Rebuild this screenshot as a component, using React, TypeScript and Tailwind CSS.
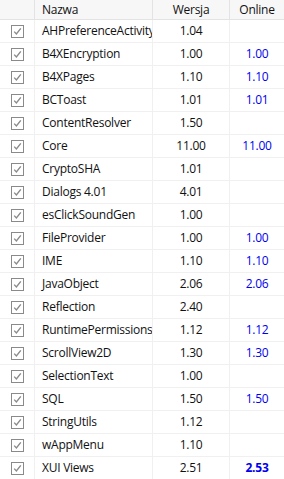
import React from 'react';

type Lib = { name: string; version: string; online?: string; bold?: boolean };

const libs: Lib[] = [
  { name: 'AHPreferenceActivity', version: '1.04' },
  { name: 'B4XEncryption', version: '1.00', online: '1.00' },
  { name: 'B4XPages', version: '1.10', online: '1.10' },
  { name: 'BCToast', version: '1.01', online: '1.01' },
  { name: 'ContentResolver', version: '1.50' },
  { name: 'Core', version: '11.00', online: '11.00' },
  { name: 'CryptoSHA', version: '1.01' },
  { name: 'Dialogs 4.01', version: '4.01' },
  { name: 'esClickSoundGen', version: '1.00' },
  { name: 'FileProvider', version: '1.00', online: '1.00' },
  { name: 'IME', version: '1.10', online: '1.10' },
  { name: 'JavaObject', version: '2.06', online: '2.06' },
  { name: 'Reflection', version: '2.40' },
  { name: 'RuntimePermissions', version: '1.12', online: '1.12' },
  { name: 'ScrollView2D', version: '1.30', online: '1.30' },
  { name: 'SelectionText', version: '1.00' },
  { name: 'SQL', version: '1.50', online: '1.50' },
  { name: 'StringUtils', version: '1.12' },
  { name: 'wAppMenu', version: '1.10' },
  { name: 'XUI Views', version: '2.51', online: '2.53', bold: true },
];

const Check: React.FC = () => (
  <div className="w-[13px] h-[13px] border border-[#8a8a8a] bg-white flex items-center justify-center">
    <svg width="9" height="9" viewBox="0 0 9 9">
      <path d="M1.2 4.6 L3.4 7 L7.8 1.4" fill="none" stroke="#8a8a8a" strokeWidth="1.4" />
    </svg>
  </div>
);

export default function App() {
  return (
    <div
      className="w-[284px] h-[479px] overflow-hidden bg-white text-[12px] text-[#111] tracking-[-0.25px]"
      style={{ fontFamily: '"Open Sans", "Noto Sans", sans-serif' }}
    >
      <div className="grid grid-cols-[35px_118px_77px_54px] h-[20px] bg-[#f7f7f7] border-b border-[#e3e3e3]">
        <div className="border-r border-[#e3e3e3]"></div>
        <div className="border-r border-[#e3e3e3] pl-[7px] leading-[19px]">Nazwa</div>
        <div className="border-r border-[#e3e3e3] text-center leading-[19px]">Wersja</div>
        <div className="text-center leading-[19px]">Online</div>
      </div>
      {libs.map(lib => (
        <div key={lib.name} className="grid grid-cols-[35px_118px_77px_54px] h-[23px] border-b border-[#f0f0f0]">
          <div className="border-r border-[#f0f0f0] flex items-center justify-center pl-[1px]">
            <Check />
          </div>
          <div className="border-r border-[#f0f0f0] pl-[7px] leading-[22px] whitespace-nowrap overflow-hidden">{lib.name}</div>
          <div className="border-r border-[#f0f0f0] text-center leading-[22px]">{lib.version}</div>
          <div className={`text-center leading-[22px] text-[#0000f0] ${lib.bold ? 'font-bold' : ''}`}>{lib.online ?? ''}</div>
        </div>
      ))}
    </div>
  );
}
